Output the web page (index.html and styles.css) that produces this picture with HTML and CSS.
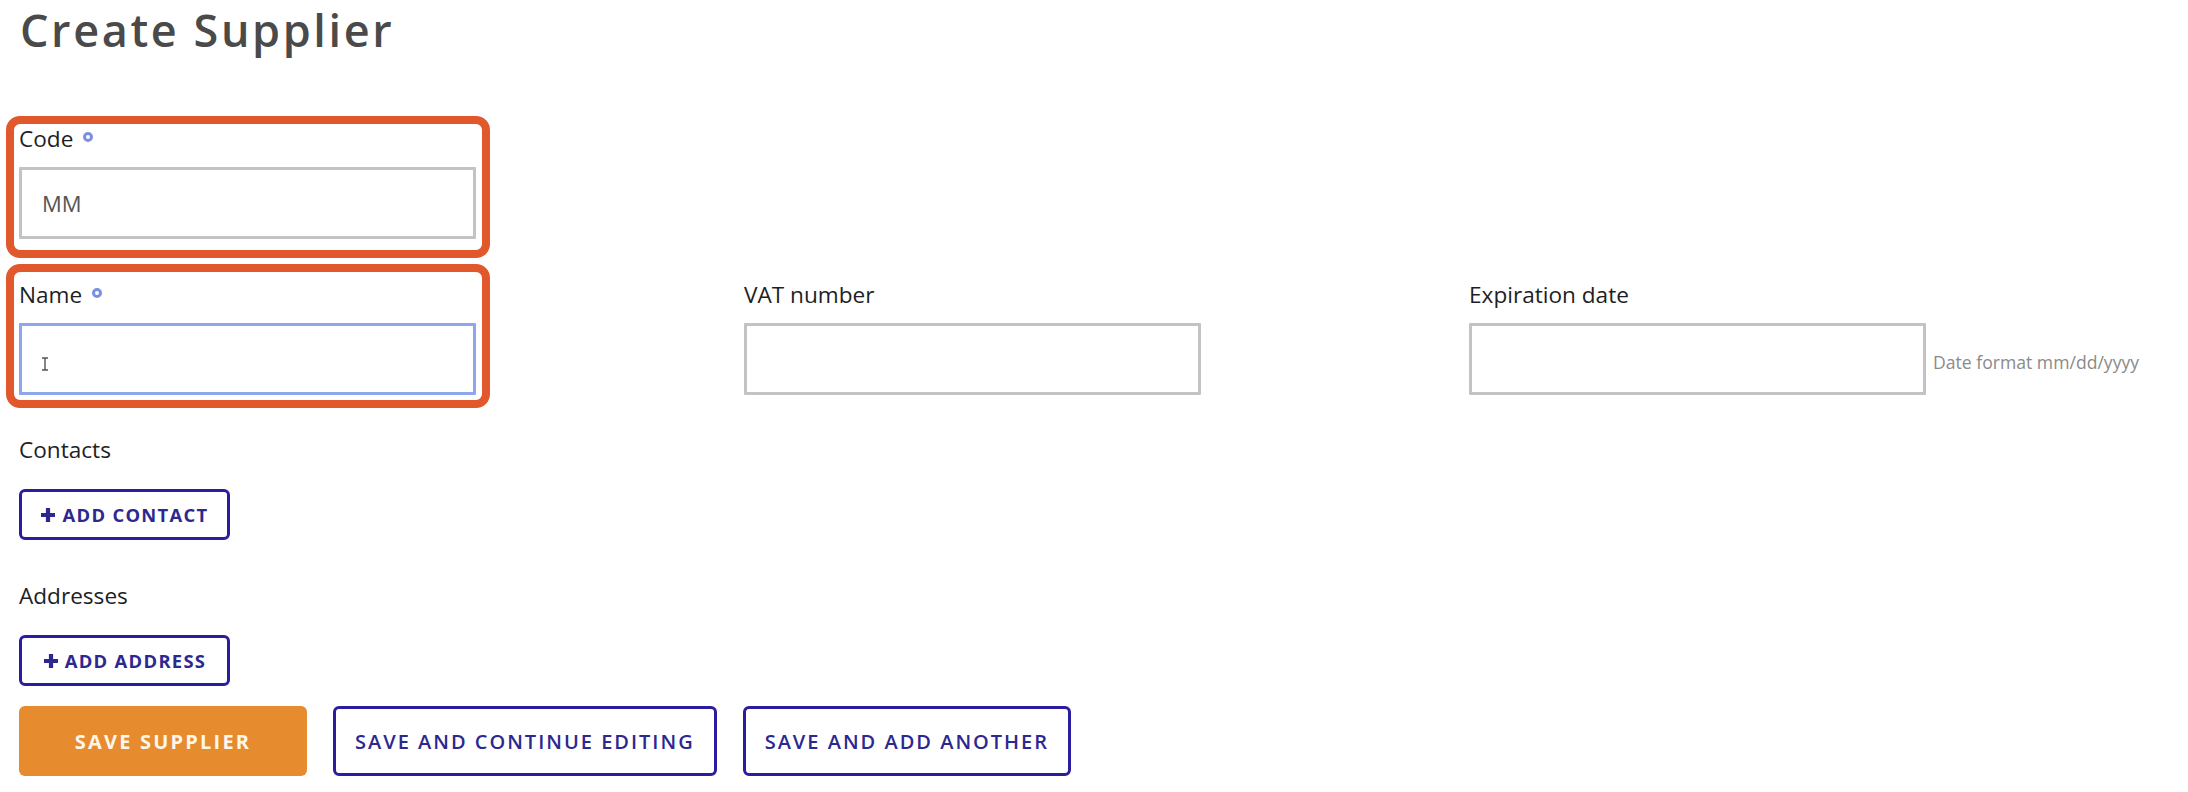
FILE: index.html
```html
<!DOCTYPE html>
<html lang="en">
<head>
<meta charset="utf-8">
<title>Create Supplier</title>
<link rel="stylesheet" href="styles.css">
</head>
<body>
<main class="page">
  <h1 class="title">Create Supplier</h1>
  <form class="form">
    <div class="row">
      <div class="field annotated annotated-code">
        <label class="label">Code <span class="req"></span></label>
        <input class="input" type="text" value="MM">
      </div>
    </div>
    <div class="row row-three">
      <div class="field annotated annotated-name">
        <label class="label">Name <span class="req"></span></label>
        <div class="input-wrap">
          <input class="input input-focus" type="text" value="">
          <svg class="ibeam" width="8" height="14" viewBox="0 0 8 14"><path d="M1 1h6M4 1v12M1 13h6" stroke="#555" stroke-width="1.4" fill="none"/></svg>
        </div>
      </div>
      <div class="field">
        <label class="label">VAT number</label>
        <input class="input" type="text" value="">
      </div>
      <div class="field field-date">
        <label class="label">Expiration date</label>
        <div class="date-line">
          <input class="input" type="text" value="">
          <span class="hint">Date format mm/dd/yyyy</span>
        </div>
      </div>
    </div>
    <div class="group">
      <div class="label">Contacts</div>
      <button type="button" class="btn btn-outline btn-add"><svg class="plus" width="16" height="16" viewBox="0 0 16 16"><path d="M8 1v14M1 8h14" stroke="currentColor" stroke-width="4.2"/></svg>ADD CONTACT</button>
    </div>
    <div class="group group-addr">
      <div class="label">Addresses</div>
      <button type="button" class="btn btn-outline btn-add"><svg class="plus" width="16" height="16" viewBox="0 0 16 16"><path d="M8 1v14M1 8h14" stroke="currentColor" stroke-width="4.2"/></svg>ADD ADDRESS</button>
    </div>
    <div class="actions">
      <button type="button" class="btn btn-primary">SAVE SUPPLIER</button>
      <button type="button" class="btn btn-outline btn-save">SAVE AND CONTINUE EDITING</button>
      <button type="button" class="btn btn-outline btn-save">SAVE AND ADD ANOTHER</button>
    </div>
  </form>
</main>
</body>
</html>
```
FILE: styles.css
```css
* { box-sizing: border-box; }
html, body { margin: 0; padding: 0; background: #ffffff; }
body { font-family: "Open Sans", "Noto Sans", sans-serif; color: #222; }

.page { padding: 0 0 0 19px; }

.title {
  margin: 3px 0 0 1px;
  font-size: 45px;
  line-height: 54px;
  font-weight: 600;
  letter-spacing: 2.6px;
  color: #4a4a4a;
}

.form { margin-top: 67px; }

.row { display: grid; grid-template-columns: 725px; }
.row-three { grid-template-columns: 725px 725px 1fr; margin-top: 41px; }

.field { position: relative; width: 457px; }
.field-date { width: auto; }

.label {
  display: block;
  font-size: 22.6px;
  line-height: 30px;
  color: #1e1e24;
}

.req {
  display: inline-block;
  width: 10px;
  height: 10px;
  border: 3px solid #7b90e2;
  border-radius: 50%;
  vertical-align: 5px;
  margin-left: 4px;
}

.input {
  display: block;
  width: 457px;
  height: 72px;
  margin-top: 13px;
  padding: 0 20px;
  border: 3px solid #c3c3c3;
  border-radius: 1px;
  background: #fff;
  font-family: "Open Sans", sans-serif;
  font-size: 22px;
  color: #555;
  outline: none;
}
.input-focus { border-color: #8ea6ea; }

.input-wrap { position: relative; }
.ibeam { position: absolute; left: 22px; top: 34px; }

.date-line { display: flex; align-items: center; gap: 7px; margin-top: 13px; }
.date-line .input { margin-top: 0; }
.hint { font-size: 17.6px; color: #8a8a8a; padding-top: 6px; }

.annotated::after {
  content: "";
  position: absolute;
  border: 8px solid #e0582c;
  border-radius: 14px;
  pointer-events: none;
}
.annotated-code::after { left: -13px; right: -14px; top: -8px; bottom: -19px; }
.annotated-name::after { left: -13px; right: -14px; top: -16px; bottom: -13px; }

.group { margin-top: 40px; }
.group-addr { margin-top: 41px; }
.group .btn { margin-top: 24px; }

.btn {
  font-family: "Open Sans", sans-serif;
  cursor: pointer;
  border-radius: 6px;
  display: inline-flex;
  align-items: center;
  justify-content: center;
}

.btn-outline {
  background: #fff;
  border: 3px solid #2b1e9e;
  color: #2c2890;
}

.btn-add {
  height: 51px;
  width: 211px;
  padding: 0 18px;
  font-size: 18.4px;
  font-weight: 700;
  letter-spacing: 1.3px;
  gap: 6px;
}
.plus { flex: none; }

.actions { display: flex; gap: 26px; margin-top: 20px; }

.btn-primary {
  height: 70px;
  width: 288px;
  border: none;
  background: #e68b2e;
  color: #fdf6ea;
  font-size: 20px;
  font-weight: 700;
  letter-spacing: 2.2px;
}

.btn-save {
  height: 70px;
  padding: 0 19px;
  font-size: 20px;
  font-weight: 600;
  letter-spacing: 2px;
}
```
